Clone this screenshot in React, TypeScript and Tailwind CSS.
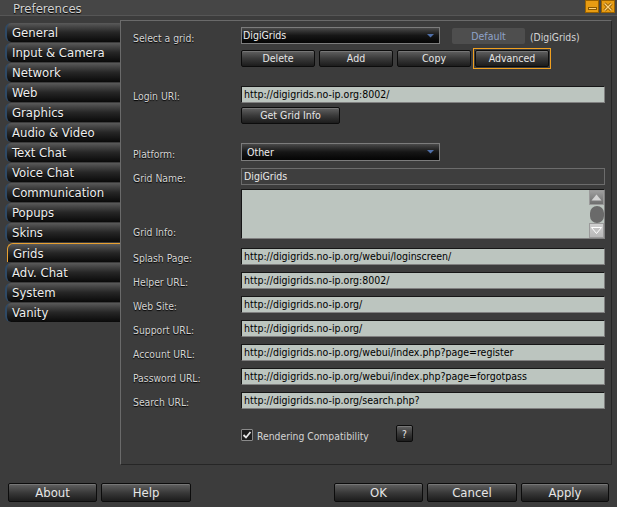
import React from "react";

const tabs = [
  "General",
  "Input & Camera",
  "Network",
  "Web",
  "Graphics",
  "Audio & Video",
  "Text Chat",
  "Voice Chat",
  "Communication",
  "Popups",
  "Skins",
  "Grids",
  "Adv. Chat",
  "System",
  "Vanity",
];

const urlRows = [
  ["Splash Page:", "http://digigrids.no-ip.org/webui/loginscreen/"],
  ["Helper URL:", "http://digigrids.no-ip.org:8002/"],
  ["Web Site:", "http://digigrids.no-ip.org/"],
  ["Support URL:", "http://digigrids.no-ip.org/"],
  ["Account URL:", "http://digigrids.no-ip.org/webui/index.php?page=register"],
  ["Password URL:", "http://digigrids.no-ip.org/webui/index.php?page=forgotpass"],
  ["Search URL:", "http://digigrids.no-ip.org/search.php?"],
];

function Btn({ label, className = "" }: { label: string; className?: string }) {
  return (
    <div
      className={`flex items-center justify-center pt-[1px] border border-[#0c0c0c] rounded-[2px] bg-gradient-to-b from-[#626262] via-[#3a3a3a] to-[#1c1c1c] text-[#e6e6e6] shadow-[inset_0_1px_0_rgba(255,255,255,0.15)] ${className}`}
    >
      {label}
    </div>
  );
}

function Field({ value, className = "" }: { value: string; className?: string }) {
  return (
    <div
      className={`flex items-center h-[17px] w-[364px] pt-[1px] bg-[#bcc5bf] border border-t-[#161616] border-l-[#161616] border-b-[#808080] border-r-[#808080] pl-[2px] text-[10.5px] text-black whitespace-nowrap overflow-hidden ${className}`}
    >
      {value}
    </div>
  );
}

function Combo({ value, className = "" }: { value: string; className?: string }) {
  return (
    <div
      className={`relative flex items-center pt-[1px] w-[199px] border border-[#7c7c7c] bg-gradient-to-b from-[#4a4a4a] via-[#161616] to-[#050505] text-[10.5px] text-[#eeeeee] ${className}`}
    >
      {value}
      <svg className="absolute right-[5px] top-1/2 -translate-y-1/2" width="7" height="4" viewBox="0 0 7 4">
        <path d="M0 0H7L3.5 3.5Z" fill="#4f6fa8" />
      </svg>
    </div>
  );
}

function Label({ text, className = "" }: { text: string; className?: string }) {
  return (
    <div className={`w-[108px] shrink-0 text-[10.3px] leading-[14px] text-[#d4d4d4] [text-shadow:0_1px_1px_#000] ${className}`}>
      {text}
    </div>
  );
}

export default function App() {
  return (
    <div className="relative w-[617px] h-[507px] bg-[#3c3c3c] overflow-hidden font-['DejaVu_Sans_Condensed','DejaVu_Sans',sans-serif] [font-stretch:condensed] select-none">
      {/* Title bar */}
      <div className="flex items-center h-[16px] bg-[#464646] border-b border-[#565656]">
        <div className="pl-[13px] pt-[1px] text-[13px] leading-none text-[#d2d2d2] [text-shadow:0_1px_1px_#000]">Preferences</div>
        <div className="ml-auto flex gap-[2px] mr-[2px] self-start">
          <div className="w-[14px] h-[13px] bg-[#e89c12] border border-[#9a6200] flex items-end justify-center pb-[2px]">
            <div className="w-[9px] h-[3px] bg-[#ffd27a] border border-[#8a5800]" />
          </div>
          <div className="w-[14px] h-[13px] bg-[#e89c12] border border-[#9a6200] flex items-center justify-center">
            <svg width="10" height="10" viewBox="0 0 10 10">
              <path d="M1.5 1.5L8.5 8.5M8.5 1.5L1.5 8.5" stroke="#8a5800" strokeWidth="3" />
              <path d="M1.5 1.5L8.5 8.5M8.5 1.5L1.5 8.5" stroke="#ffd27a" strokeWidth="1.4" />
            </svg>
          </div>
        </div>
      </div>

      <div className="flex mt-[4px]">
        {/* Tabs */}
        <div className="w-[120px] pl-[5px] pt-[3px] flex flex-col gap-[1px]">
          {tabs.map((t) =>
            t === "Grids" ? (
              <div
                key={t}
                className="h-[19px] ml-[2px] flex items-center pl-[5px] pt-[1px] rounded-tl-[6px] border-t border-l border-[#e8a030] bg-gradient-to-b from-[#5a5a5a] via-[#262626] to-[#0a0a0a] text-[13px] text-[#eeeeee] [text-shadow:0_1px_1px_#000]"
              >
                {t}
              </div>
            ) : (
              <div
                key={t}
                className="h-[19px] flex items-center pl-[5px] pt-[1px] rounded-l-[6px] border-l-2 border-[#2f4a66] bg-gradient-to-b from-[#5a5a5a] via-[#262626] to-[#0a0a0a] text-[13px] text-[#eeeeee] [text-shadow:0_1px_1px_#000]"
              >
                {t}
              </div>
            )
          )}
        </div>

        {/* Panel */}
        <div className="w-[492px] h-[445px] border border-t-[#6a6a6a] border-l-[#6a6a6a] border-b-[#262626] border-r-[#262626] pl-[12px] pt-[6px] flex flex-col">
          {/* Select a grid */}
          <div className="flex items-start h-[17px]">
            <Label text="Select a grid:" className="pt-[4px]" />
            <Combo value="DigiGrids" className="h-[17px] pl-[1px]" />
            <div className="ml-[12px] mt-[1px] w-[73px] h-[16px] pt-[1px] rounded-[2px] bg-[#4e4e4e] flex items-center justify-center text-[10.5px] text-[#8fa3c9]">
              Default
            </div>
            <div className="ml-[5px] pt-[3px] text-[10.3px] leading-[14px] text-[#d4d4d4]">(DigiGrids)</div>
          </div>

          <div className="flex items-center h-[20px] mt-[4px] pl-[108px] text-[10.5px]">
            <Btn label="Delete" className="w-[74px] h-[17px]" />
            <Btn label="Add" className="ml-[4px] w-[74px] h-[17px]" />
            <Btn label="Copy" className="ml-[4px] w-[74px] h-[17px]" />
            <div className="ml-[2px] border border-[#f0a020] p-[1px]">
              <Btn label="Advanced" className="w-[74px] h-[17px]" />
            </div>
          </div>

          <div className="flex items-start h-[17px] mt-[18px]">
            <Label text="Login URI:" className="pt-[3px]" />
            <Field value="http://digigrids.no-ip.org:8002/" />
          </div>
          <div className="flex items-center h-[17px] mt-[4px] pl-[108px] text-[10.5px]">
            <Btn label="Get Grid Info" className="w-[99px] h-[17px]" />
          </div>

          <div className="flex items-start h-[18px] mt-[19px]">
            <Label text="Platform:" className="pt-[4px]" />
            <Combo value="Other" className="h-[18px] pl-[5px]" />
          </div>

          <div className="flex items-start h-[17px] mt-[7px]">
            <Label text="Grid Name:" className="pt-[3px]" />
            <div className="flex items-center h-[17px] w-[364px] pt-[1px] border border-[#6c6c6c] bg-[#3e3e3e] pl-[2px] text-[10.5px] text-[#e8e8e8]">
              DigiGrids
            </div>
          </div>

          <div className="flex items-end h-[50px] mt-[4px]">
            <Label text="Grid Info:" />
            <div className="flex h-[50px] w-[364px] bg-[#bcc5bf] border border-t-[#161616] border-l-[#161616] border-b-[#808080] border-r-[#808080]">
              <div className="flex-1" />
              <div className="w-[15px] flex flex-col">
                <div className="h-[15px] border border-[#9a9a9a] flex items-center justify-center bg-gradient-to-b from-[#9e9e9e] to-[#6e6e6e]">
                  <svg width="11" height="7" viewBox="0 0 11 7">
                    <path d="M0.5 6.5L5.5 0.5L10.5 6.5Z" fill="#d4d4d4" />
                  </svg>
                </div>
                <div className="flex-1 flex items-center justify-center">
                  <div className="w-[14px] h-[17px] rounded-[7px] bg-[#6a6a6a]" />
                </div>
                <div className="h-[15px] border border-[#9a9a9a] bg-gradient-to-b from-[#d0d0d0] to-[#b8b8b8] flex items-center justify-center">
                  <svg width="11" height="7" viewBox="0 0 11 7">
                    <path d="M0.5 0.5L5.5 6.5L10.5 0.5Z" fill="#c4c4c4" stroke="#ffffff" strokeWidth="1" />
                  </svg>
                </div>
              </div>
            </div>
          </div>

          {urlRows.map(([label, value], i) => (
            <div key={label} className={`flex items-start h-[17px] ${i === 0 ? "mt-[9px]" : "mt-[7px]"}`}>
              <Label text={label} className="pt-[3px]" />
              <Field value={value} />
            </div>
          ))}

          <div className="flex items-start mt-[16px] h-[17px] pl-[108px]">
            <div className="w-[12px] h-[12px] mt-[4px] border border-[#8a8a8a] bg-[#1e1e1e] rounded-[1px] flex items-center justify-center">
              <svg width="10" height="10" viewBox="0 0 10 10">
                <path d="M1.5 5L4 7.5L8.5 2" stroke="#e8e8e8" strokeWidth="1.8" fill="none" />
              </svg>
            </div>
            <div className="ml-[4px] w-[139px] pt-[4px] text-[10.3px] leading-[14px] text-[#d4d4d4]">Rendering Compatibility</div>
            <Btn label="?" className="w-[17px] h-[17px] text-[10px]" />
          </div>
        </div>
      </div>

      {/* Bottom buttons */}
      <div className="flex items-center mt-[18px] h-[19px] text-[13px]">
        <Btn label="About" className="ml-[8px] w-[89px] h-[19px]" />
        <Btn label="Help" className="ml-[4px] w-[90px] h-[19px]" />
        <Btn label="OK" className="ml-[143px] w-[89px] h-[19px]" />
        <Btn label="Cancel" className="ml-[4px] w-[90px] h-[19px]" />
        <Btn label="Apply" className="ml-[4px] w-[88px] h-[19px]" />
      </div>
    </div>
  );
}
